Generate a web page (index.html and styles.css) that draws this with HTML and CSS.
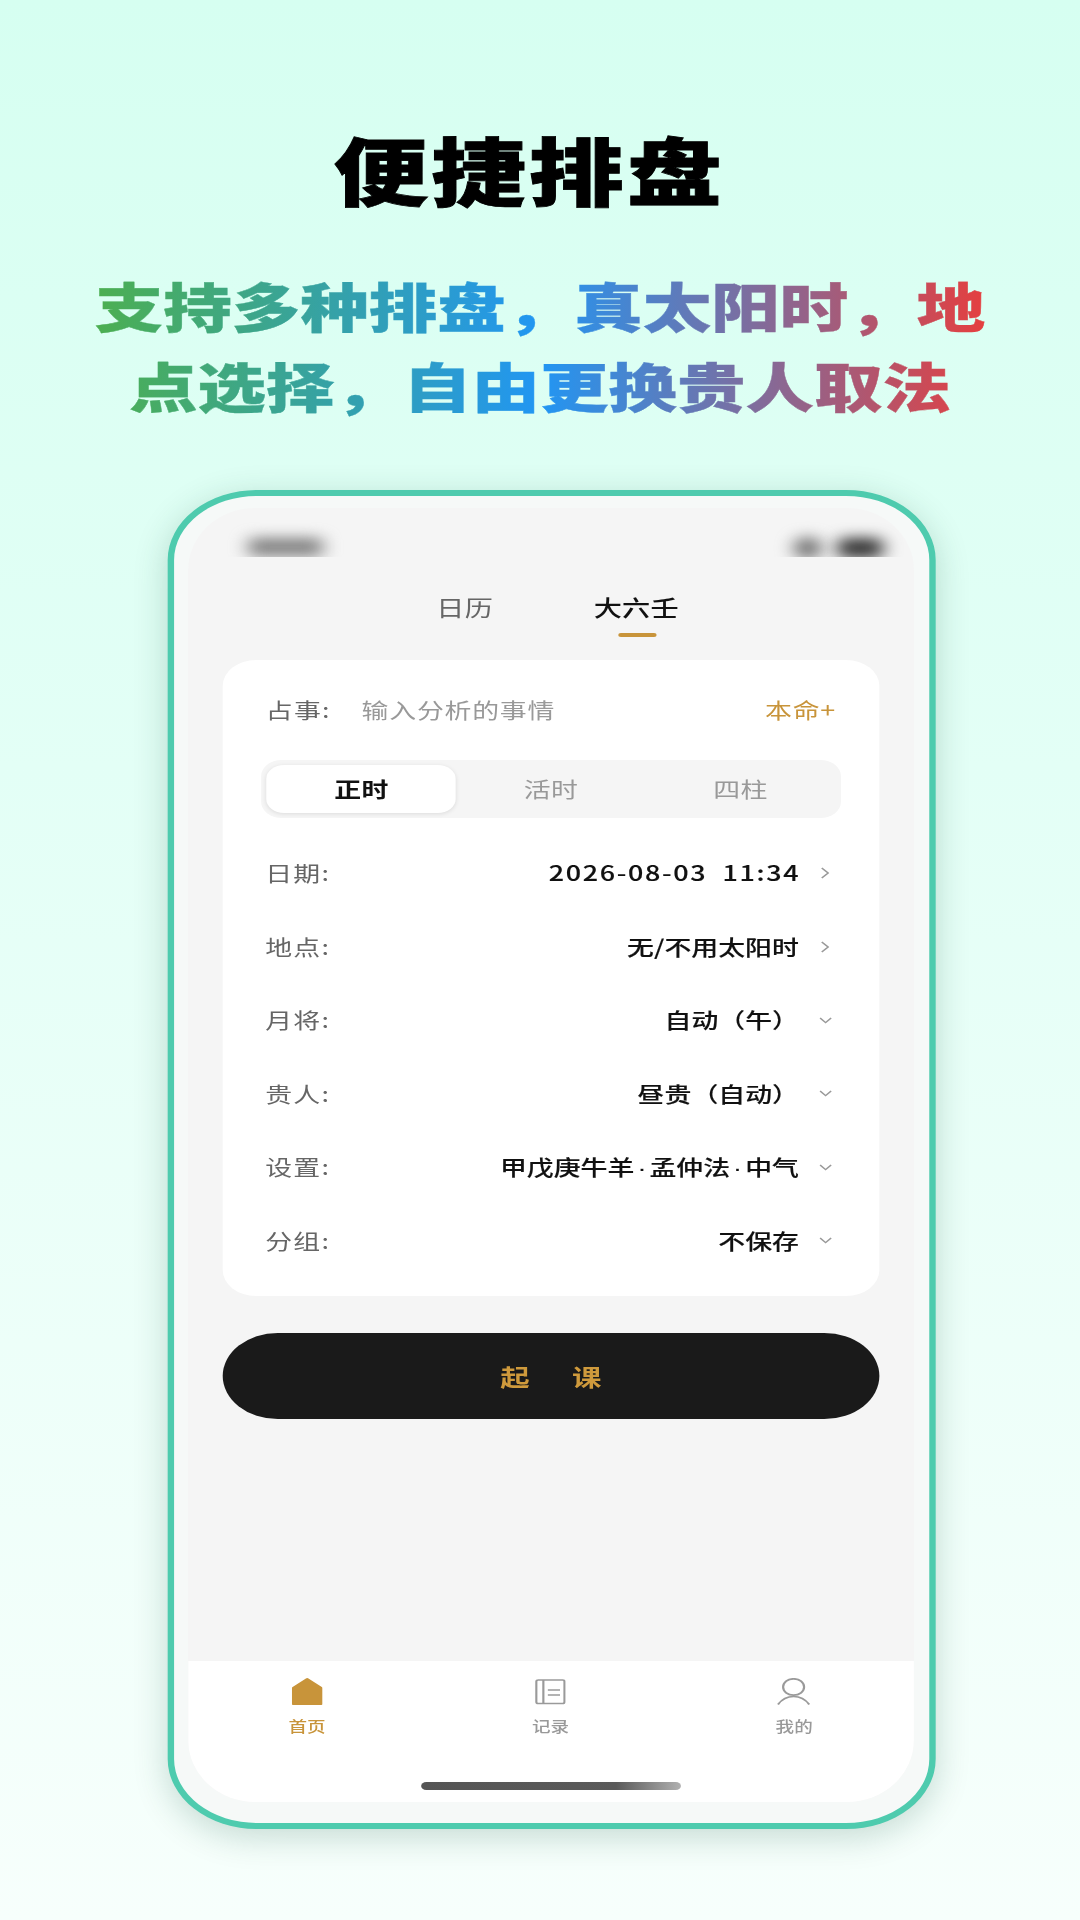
FILE: index.html
```html
<!DOCTYPE html>
<html lang="zh-CN">
<head>
<meta charset="utf-8">
<title>便捷排盘</title>
<link rel="stylesheet" href="styles.css">
</head>
<body>
<div class="stage">
  <header class="hero">
    <h1 class="title">便捷排盘</h1>
    <h2 class="subtitle">支持多种排盘，真太阳时，地<br>点选择，自由更换贵人取法</h2>
  </header>
  <div class="phone">
    <div class="screen">
      <div class="statusbar" aria-hidden="true">
        <span class="blur-time"></span>
        <span class="blur-icons"><span class="blur-wifi"></span><span class="blur-batt"></span></span>
      </div>
      <nav class="tabs">
        <div class="tab">日历</div>
        <div class="tab active">大六壬</div>
      </nav>
      <section class="card">
        <div class="head-row">
          <span class="label">占事:</span>
          <span class="placeholder">输入分析的事情</span>
          <span class="benming">本命+</span>
        </div>
        <div class="segment">
          <div class="seg on">正时</div>
          <div class="seg">活时</div>
          <div class="seg">四柱</div>
        </div>
        <div class="row"><span class="label">日期:</span><span class="value date">2026-08-03&nbsp;&nbsp;11:34</span><span class="chev"><svg width="7" height="12" viewBox="0 0 7 12"><path d="M1 1l5 5-5 5"/></svg></span></div>
        <div class="row"><span class="label">地点:</span><span class="value">无/不用太阳时</span><span class="chev"><svg width="7" height="12" viewBox="0 0 7 12"><path d="M1 1l5 5-5 5"/></svg></span></div>
        <div class="row"><span class="label">月将:</span><span class="value">自动（午）</span><span class="chev"><svg width="10" height="7" viewBox="0 0 10 7"><path d="M.7 1l4.3 4.6L9.3 1"/></svg></span></div>
        <div class="row"><span class="label">贵人:</span><span class="value">昼贵（自动）</span><span class="chev"><svg width="10" height="7" viewBox="0 0 10 7"><path d="M.7 1l4.3 4.6L9.3 1"/></svg></span></div>
        <div class="row"><span class="label">设置:</span><span class="value">甲戊庚牛羊<span class="dot">·</span>孟仲法<span class="dot">·</span>中气</span><span class="chev"><svg width="10" height="7" viewBox="0 0 10 7"><path d="M.7 1l4.3 4.6L9.3 1"/></svg></span></div>
        <div class="row"><span class="label">分组:</span><span class="value">不保存</span><span class="chev"><svg width="10" height="7" viewBox="0 0 10 7"><path d="M.7 1l4.3 4.6L9.3 1"/></svg></span></div>
      </section>
      <div class="cta"><span>起</span><span>课</span></div>
      <div class="spacer"></div>
      <footer class="nav">
        <div class="nav-items">
          <div class="nav-item current">
            <svg class="nav-icon" width="24" height="27" viewBox="0 0 24 27"><path class="fill" d="M11 .4a1.6 1.6 0 0 1 2 0L23.400 9a1.6 1.6 0 0 1 .6 1.300V26a1 1 0 0 1-1 1H1a1 1 0 0 1-1-1V10.300a1.600 1.600 0 0 1 .6-1.300z"/></svg>
            <span>首页</span>
          </div>
          <div class="nav-item">
            <svg class="nav-icon" width="24" height="27" viewBox="0 0 24 27"><g class="line"><rect x="1" y="2" width="22" height="23.500" rx="1.500"/><path d="M6.500 2v23.500M10 12h9.500M10 17h9.500"/></g></svg>
            <span>记录</span>
          </div>
          <div class="nav-item">
            <svg class="nav-icon" width="26" height="27" viewBox="0 0 26 27"><g class="line"><ellipse cx="13" cy="9" rx="8.200" ry="8.200"/><path d="M.8 26.500C4 21 8.500 18.500 13 18.500s9 2.500 12.200 8"/></g></svg>
            <span>我的</span>
          </div>
        </div>
        <div class="home-bar"></div>
      </footer>
    </div>
  </div>
</div>
</body>
</html>
```
FILE: styles.css
```css
* { box-sizing: border-box; margin: 0; padding: 0; }
html, body {
  width: 1080px;
  height: 1920px;
  overflow: hidden;
  background: #f6fffc;
  font-family: "Noto Sans CJK SC", "Noto Sans", sans-serif;
}
/* The reference is horizontally stretched as a whole: build it at its natural width and stretch once. */
.stage {
  width: 843.75px;
  height: 1920px;
  transform: scaleX(1.28);
  transform-origin: 0 0;
  background: linear-gradient(180deg, #d6fff1 0%, #e3fff6 40%, #f7fffc 100%);
  overflow: hidden;
}
.hero { padding-top: 118px; text-align: center; }
.title {
  font-size: 74px;
  line-height: 100px;
  font-weight: 900;
  letter-spacing: 2.500px;
  color: #000;
  padding-right: 17px;
  -webkit-text-stroke: .8px #000;
}
.subtitle {
  margin: 47px auto 0;
  width: 696px;
  font-size: 53.5px;
  line-height: 80px;
  font-weight: 900;
  white-space: nowrap;
  color: transparent;
  -webkit-text-stroke: .4px transparent;
  background: linear-gradient(90deg, #4caf50 0%, #2196f3 50%, #e53f3f 100%);
  -webkit-background-clip: text;
  background-clip: text;
}
.phone {
  margin: 65px 0 0 131.25px;
  width: 600px;
  height: 1339px;
  border: solid #4ecbae;
  border-width: 6px 5.2px;
  border-radius: 70px;
  background: #f6f9f8;
  padding: 12px 12.7px 21px 10.4px;
  box-shadow: 0 8px 30px rgba(0, 70, 50, .2);
}
.screen {
  height: 100%;
  background: #f5f5f5;
  border-radius: 52px / 62px;
  overflow: hidden;
  display: flex;
  flex-direction: column;
}
.statusbar {
  height: 49px;
  flex: none;
  overflow: hidden;
  display: flex;
  justify-content: space-between;
  align-items: flex-start;
  padding: 30px 24px 0 47px;
}
.blur-time { width: 58px; height: 18px; background: #808080; filter: blur(7px); border-radius: 4px; }
.blur-icons { display: flex; gap: 12px; align-items: center; margin-top: -1px; }
.blur-wifi { width: 22px; height: 22px; background: #707070; filter: blur(7px); border-radius: 50%; }
.blur-batt { width: 36px; height: 20px; background: #333; filter: blur(7px); border-radius: 7px; }
.tabs {
  flex: none;
  display: flex;
  justify-content: center;
  gap: 78.6px;
  padding: 34px 0 0 11px;
  height: 103px;
}
.tab {
  font-size: 22px;
  line-height: 30px;
  color: #666;
  position: relative;
  letter-spacing: .2px;
}
.tab.active { color: #111; font-weight: 500; }
.tab.active::after {
  content: "";
  position: absolute;
  left: 50%;
  top: 41.500px;
  width: 30px;
  height: 4.6px;
  margin-left: -14.500px;
  border-radius: 3px;
  background: #c8943a;
}
.card {
  flex: none;
  margin-left: 27.500px;
  width: 512.5px;
  height: 636px;
  background: #fff;
  border-radius: 26px;
  padding: 30px 29.500px 0;
}
.head-row {
  display: flex;
  align-items: center;
  height: 40px;
  padding: 0 4px 2px 4px;
  font-size: 21px;
}
.label { color: #666; font-size: 21px; white-space: nowrap; letter-spacing: 1px; }
.placeholder { margin-left: 24px; color: #999; letter-spacing: .6px; flex: 1; }
.benming { color: #c8943a; letter-spacing: .6px; }
.segment {
  margin-top: 30px;
  height: 58px;
  background: #f5f5f5;
  border-radius: 16px;
  padding: 5px 4.700px;
  display: flex;
}
.seg {
  flex: 1;
  display: flex;
  align-items: center;
  justify-content: center;
  padding-bottom: 2px;
  font-size: 21px;
  color: #999;
  border-radius: 14px;
  letter-spacing: .3px;
}
.seg.on {
  background: #fff;
  color: #111;
  font-weight: 700;
  box-shadow: 0 1px 4px rgba(0, 0, 0, .1);
}
.row {
  height: 73.500px;
  display: flex;
  align-items: center;
  padding: 0 0 2px 3.500px;
}
.segment + .row { margin-top: 18.500px; }
.value {
  margin-left: auto;
  font-size: 21px;
  font-weight: 500;
  color: #111;
  white-space: nowrap;
  -webkit-text-stroke: .12px #111;
}
.date { letter-spacing: 1.300px; margin-right: -1px; }
.dot { font-family: "Liberation Sans", sans-serif; margin: 0 2.400px; }
.chev {
  width: 33px;
  flex: none;
  display: flex;
  justify-content: center;
  margin-top: 2px;
  padding-left: 10px;
  padding-right: 2px;
}
.chev svg { display: block; fill: none; stroke: #999; stroke-width: 1.300; }
.cta {
  flex: none;
  margin: 37px 0 0 27.500px;
  width: 512.5px;
  height: 86px;
  border-radius: 43px;
  background: #1a1a1a;
  display: flex;
  justify-content: center;
  align-items: center;
  gap: 33px;
  color: #cf9a3c;
  font-size: 23px;
  font-weight: 700;
}
.spacer { flex: 1; }
.nav {
  flex: none;
  height: 141px;
  background: #fff;
  padding-top: 17px;
}
.nav-items { display: flex; margin: 0 -2px 0 -2px; }
.nav-item {
  flex: 1;
  display: flex;
  flex-direction: column;
  align-items: center;
  color: #999;
  font-size: 14.500px;
  line-height: 20px;
  font-weight: 500;
}
.nav-icon { display: block; margin-bottom: 11px; }
.nav-item.current { color: #c8943a; }
.fill { fill: #c8943a; }
.line { fill: none; stroke: #9a9a9a; stroke-width: 1.700; }
.home-bar {
  width: 203px;
  height: 8px;
  margin: 46px auto 0;
  border-radius: 4px;
  background: linear-gradient(90deg, #555 0%, #5a5a5a 75%, #b0b0b0 100%);
}
```
